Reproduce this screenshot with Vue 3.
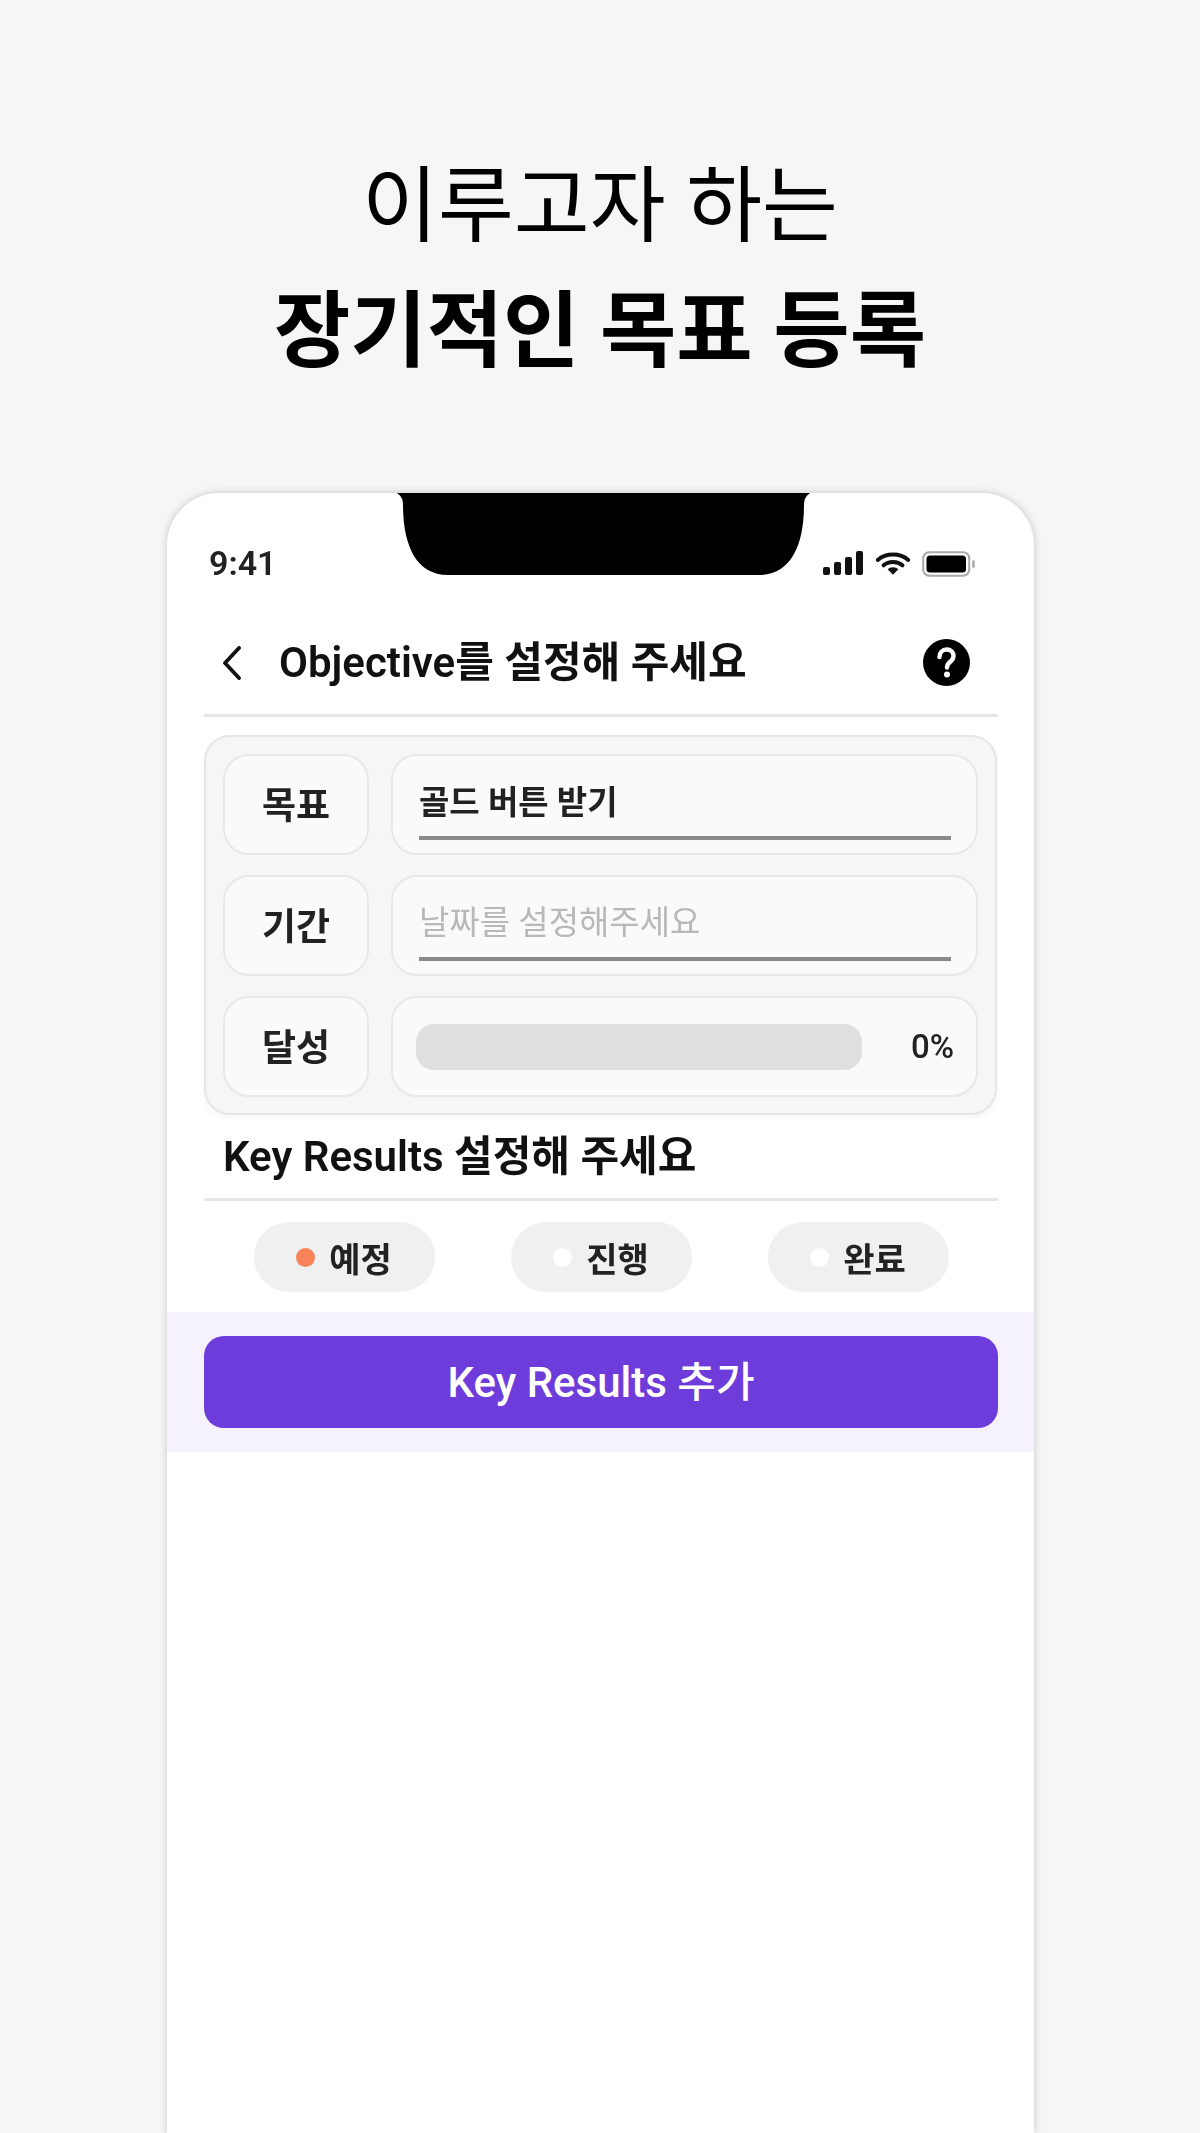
<script setup>
const rows = [
  { label: '목표', kind: 'value', text: '골드 버튼 받기' },
  { label: '기간', kind: 'placeholder', text: '날짜를 설정해주세요' },
  { label: '달성', kind: 'progress', text: '0%' },
]
const pills = [
  { label: '예정', active: true },
  { label: '진행', active: false },
  { label: '완료', active: false },
]
</script>

<template>
  <div class="page">
    <header class="hero">
      <p class="hero-line">이루고자 하는</p>
      <p class="hero-line strong">장기적인 목표 등록</p>
    </header>

    <section class="phone">
      <svg class="notch" viewBox="0 0 413 82" aria-hidden="true">
        <path d="M0 0H413C409 3 407 6 407 12C407 52 394 82 362 82H51C19 82 6 52 6 12C6 6 4 3 0 0Z" fill="#000" />
      </svg>

      <div class="status">
        <span class="time">9:41</span>
        <div class="status-icons">
          <svg width="41" height="25" viewBox="0 0 41 25" aria-hidden="true">
            <rect x="0" y="16" width="7" height="8" rx="2" fill="#111" />
            <rect x="11" y="11" width="7" height="13" rx="2" fill="#111" />
            <rect x="22" y="6" width="7" height="18" rx="2" fill="#111" />
            <rect x="33" y="0" width="7" height="24" rx="2" fill="#111" />
          </svg>
          <svg width="34" height="25" viewBox="0 0 38 26" aria-hidden="true">
            <path d="M2 9C11 1 27 1 36 9" fill="none" stroke="#111" stroke-width="4.5" stroke-linecap="round" />
            <path d="M8.5 15C14 10 24 10 29.5 15" fill="none" stroke="#111" stroke-width="4.5" stroke-linecap="round" />
            <path d="M13 19.5C16 16.5 22 16.5 25 19.5L19 25.5Z" fill="#111" />
          </svg>
          <svg width="54" height="26" viewBox="0 0 54 26" aria-hidden="true">
            <rect x="1.2" y="1.2" width="46" height="23.6" rx="6" fill="none" stroke="#a8a8a8" stroke-width="2" />
            <rect x="4.5" y="4.5" width="39.5" height="17" rx="3.5" fill="#000" />
            <rect x="50" y="9" width="3" height="8" rx="1.5" fill="#b5b5b5" />
          </svg>
        </div>
      </div>

      <div class="content">
        <div class="nav">
          <svg class="back" width="20" height="34" viewBox="0 0 20 34" aria-hidden="true">
            <path d="M17 2L3 17L17 32" fill="none" stroke="#111" stroke-width="3.8" stroke-linecap="round" stroke-linejoin="round" />
          </svg>
          <h1 class="title">Objective를 설정해 주세요</h1>
          <svg class="help" width="47" height="47" viewBox="0 0 47 47" aria-hidden="true">
            <circle cx="23.5" cy="23.5" r="23.5" fill="#000" />
            <path d="M16.5 18C16.5 13.5 19.6 10.5 23.7 10.5C27.8 10.5 30.5 13.2 30.5 17C30.5 20 29 21.5 27 23C25 24.5 24 25.6 24 28.5" fill="none" stroke="#fff" stroke-width="4.4" stroke-linecap="round" />
            <circle cx="24" cy="35.5" r="3" fill="#fff" />
          </svg>
        </div>

        <div class="card">
          <div v-for="row in rows" :key="row.label" class="row">
            <div class="label">{{ row.label }}</div>
            <div v-if="row.kind === 'progress'" class="field progress-field">
              <div class="track"></div>
              <span class="percent">{{ row.text }}</span>
            </div>
            <div v-else class="field">
              <div class="input" :class="row.kind">{{ row.text }}</div>
            </div>
          </div>
        </div>

        <h2 class="section">Key Results 설정해 주세요</h2>

        <div class="pills">
          <div v-for="pill in pills" :key="pill.label" class="pill">
            <span class="dot" :class="{ active: pill.active }"></span>
            <span>{{ pill.label }}</span>
          </div>
        </div>
      </div>

      <div class="band">
        <button class="add" type="button">Key Results 추가</button>
      </div>
    </section>
  </div>
</template>

<style>
html, body { margin: 0; background: #f6f6f6; }
</style>

<style scoped>
.page {
  width: 1200px;
  height: 2133px;
  overflow: hidden;
  display: flex;
  flex-direction: column;
  background: #f6f6f6;
  font-family: Roboto, "Noto Sans CJK KR", sans-serif;
  color: #111;
}
.hero {
  height: 493px;
  box-sizing: border-box;
  padding-top: 149px;
  text-align: center;
  color: #000;
}
.hero-line {
  margin: 0;
  height: 125px;
  line-height: 116px;
  font-size: 82.5px;
  font-weight: 400;
}
.strong { font-weight: 700; font-size: 83px; }
.phone {
  position: relative;
  flex: 1;
  margin: 0 166px 0 167px;
  background: #fff;
  border-radius: 52px 52px 0 0;
  box-shadow: 0 0 8px rgba(0, 0, 0, 0.2);
}
.notch {
  position: absolute;
  left: 230px;
  top: 0;
  width: 413px;
  height: 82px;
}
.status {
  height: 98px;
  box-sizing: border-box;
  padding: 51px 58px 0 42px;
  display: flex;
  justify-content: space-between;
  align-items: flex-start;
  filter: blur(0.4px);
}
.time { font-size: 34px; line-height: 38px; font-weight: 600; color: #222; }
.status-icons { display: flex; gap: 12px; align-items: flex-start; padding-top: 7px; }
.content { padding: 0 36px 0 37px; filter: blur(0.5px); }
.nav {
  height: 126px;
  box-sizing: border-box;
  border-bottom: 3px solid #e6e6e6;
  display: flex;
  align-items: center;
  padding: 20px 28px 0 18px;
}
.back { flex: none; }
.title {
  flex: 1;
  margin: 0 0 0 37px;
  font-size: 42px;
  line-height: 48px;
  font-weight: 600;
  color: #111;
}
.help { flex: none; }
.card {
  margin: 18px 1px 0 0;
  box-sizing: border-box;
  height: 380px;
  padding: 17px 17px 16px;
  border: 2px solid #e6e6e6;
  border-radius: 26px;
  background: #f6f6f6;
  display: flex;
  flex-direction: column;
  gap: 20px;
  box-shadow: 0 3px 6px rgba(0, 0, 0, 0.04);
}
.row { display: flex; gap: 22px; height: 101px; }
.label, .field {
  box-sizing: border-box;
  border: 2px solid #e8e8e8;
  border-radius: 26px;
  background: #fafafa;
}
.label {
  flex: none;
  width: 146px;
  padding-bottom: 4px;
  display: flex;
  align-items: center;
  justify-content: center;
  font-size: 37px;
  font-weight: 700;
  color: #222;
}
.field { flex: 1; padding: 0 25px 0 26px; display: flex; }
.input {
  flex: 1;
  height: 84px;
  box-sizing: border-box;
  border-bottom: 4px solid #8a8a8a;
  padding-top: 23px;
  line-height: 48px;
  font-size: 33px;
}
.value { font-weight: 700; color: #222; }
.placeholder { padding-top: 22px; font-weight: 400; color: #b8b8b8; }
.progress-field {
  padding: 0 22px 0 23px;
  align-items: center;
  justify-content: space-between;
}
.track {
  width: 446px;
  height: 46px;
  border-radius: 18px;
  background: #dfdfdf;
}
.percent { font-size: 33px; font-weight: 500; color: #222; }
.section {
  margin: 0;
  box-sizing: border-box;
  height: 86px;
  padding: 16px 0 0 19px;
  line-height: 52px;
  border-bottom: 3px solid #e6e6e6;
  font-size: 42px;
  font-weight: 600;
  color: #111;
}
.pills {
  display: flex;
  justify-content: center;
  gap: 76px;
  padding-top: 21px;
}
.pill {
  width: 181px;
  height: 70px;
  box-sizing: border-box;
  border-radius: 35px;
  background: #f0f0f0;
  display: flex;
  align-items: center;
  justify-content: center;
  gap: 14px;
  font-size: 34px;
  font-weight: 600;
  color: #222;
}
.dot {
  width: 19px;
  height: 19px;
  border-radius: 50%;
  background: #fff;
}
.dot.active { background: #f98358; }
.band {
  margin-top: 20px;
  height: 140px;
  box-sizing: border-box;
  padding: 24px 36px 0 37px;
  background: #f5f2fe;
}
.add {
  display: block;
  width: 100%;
  height: 92px;
  border: none;
  border-radius: 20px;
  background: #6d3cdb;
  color: #fff;
  font-family: inherit;
  font-size: 42px;
  font-weight: 500;
  padding: 0 0 8px;
}
</style>
